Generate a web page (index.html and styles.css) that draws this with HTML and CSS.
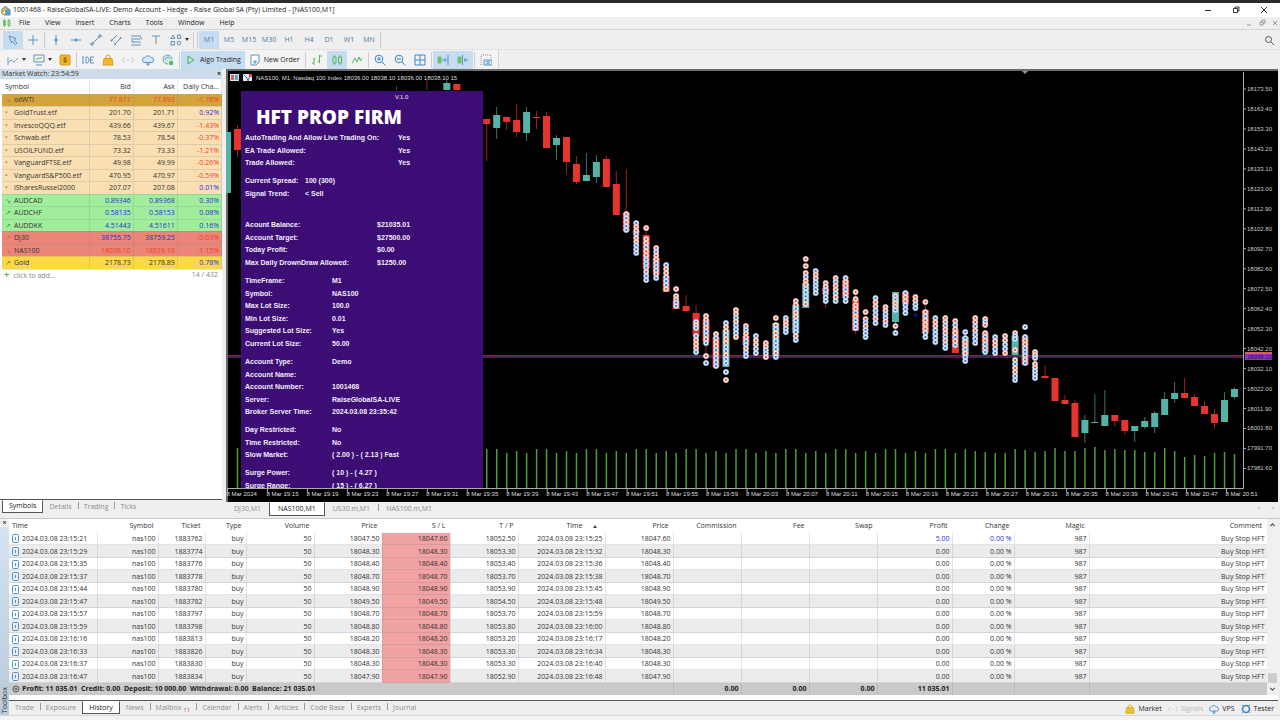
FILE: index.html
```html
<!DOCTYPE html>
<html lang="en">
<head>
<meta charset="utf-8">
<title>1001468 - RaiseGlobalSA-LIVE: Demo Account</title>
<link rel="stylesheet" href="styles.css">
</head>
<body>
<header class="titlebar">
  <svg class="logo" viewBox="0 0 12 12"><path d="M2 5 6 1l4 4" fill="none" stroke="#666" /><circle cx="5.500" cy="7" r="4" fill="#f3e3a0" stroke="#8a8348"/><path d="M7 5h4v6H6z" fill="#5aa0d8"/><path d="M2 8l3-3 2 3" fill="none" stroke="#4b9a4b"/></svg>
  <h1 class="title">1001468 - RaiseGlobalSA-LIVE: Demo Account - Hedge - Raise Global SA (Pty) Limited - [NAS100,M1]</h1>
  <div class="wins">
    <button aria-label="Minimize"><svg viewBox="0 0 8 8"><path d="M1 4.500h6"/></svg></button>
    <button aria-label="Restore"><svg viewBox="0 0 8 8"><path d="M1.500 2.500h4v4h-4zM3 2.500V1h4v4H5.500"/></svg></button>
    <button aria-label="Close"><svg viewBox="0 0 8 8"><path d="M1 1l6 6M7 1 1 7"/></svg></button>
  </div>
</header>
<nav class="menu">
  <svg class="menu-ico" viewBox="0 0 10 10"><path d="M1.500 2.500h2v5h-2zM6 2.500h2v5H6zM2.500 1v8M7 1v8" fill="#e4f7e4" stroke="#6cc46c"/></svg>
  <button>File</button><button>View</button><button>Insert</button><button>Charts</button><button>Tools</button><button>Window</button><button>Help</button>
  <div class="mdi"><button aria-label="Minimize chart"><svg viewBox="0 0 8 8"><path d="M2 6h4"/></svg></button><button aria-label="Restore chart"><svg viewBox="0 0 8 8"><path d="M2 3h3v3H2zM4 3V1h3v3H5"/></svg></button><button aria-label="Close chart"><svg viewBox="0 0 8 8"><path d="M2 2l4 4M6 2 2 6"/></svg></button></div>
</nav>
<div class="bar bar-draw">
  <button class="tb on" aria-label="Cursor"><svg viewBox="0 0 12 12"><path d="M2 2l7 2.500-2 1.500 3 3-1.500 1.500-3-3L4.500 9z"/></svg></button>
  <button class="tb" aria-label="Crosshair"><svg viewBox="0 0 12 12"><path d="M6 1v10M1 6h10"/></svg></button>
  <i class="sep"></i>
  <button class="tb" aria-label="Vertical line"><svg viewBox="0 0 12 12"><path d="M6 1v10M5 5h2v2H5z"/></svg></button>
  <button class="tb" aria-label="Horizontal line"><svg viewBox="0 0 12 12"><path d="M1 6h10M5 5h2v2H5z"/></svg></button>
  <button class="tb" aria-label="Trendline"><svg viewBox="0 0 12 12"><path d="M2 10 10 2M1 9h2v2H1zM9 1h2v2H9z"/></svg></button>
  <button class="tb" aria-label="Channel"><svg viewBox="0 0 12 12"><path d="M1 7l6-6M5 10l6-6M1 6h1v1H1zM4.500 9.500h1v1h-1zM10 3.500h1v1h-1z"/></svg></button>
  <button class="tb" aria-label="Fibonacci"><svg viewBox="0 0 12 12"><path d="M1 2h10M1 5h9M3 8h8M1 11h10M10 4h2v2M1 7h2v2"/></svg></button>
  <button class="tb" aria-label="Text"><svg viewBox="0 0 12 12"><path d="M2 2h8M6 2v8"/></svg></button>
  <button class="tb wide" aria-label="Shapes"><svg viewBox="0 0 12 12"><path d="M3 1l2 3.500H1zM7.500 1h3v3.500h-3zM1 7.500h3.500V11H1z"/><circle cx="9" cy="9.200" r="1.800"/></svg><b class="caret"></b></button>
  <i class="sep"></i><i class="grip"></i>
  <button class="tb on">M1</button><button class="tb">M5</button><button class="tb">M15</button><button class="tb">M30</button><button class="tb">H1</button><button class="tb">H4</button><button class="tb">D1</button><button class="tb">W1</button><button class="tb">MN</button>
  <i class="sep"></i>
  <button class="tb search" aria-label="Search"><svg viewBox="0 0 12 12"><circle cx="5.500" cy="5.500" r="3"/><path d="M8 8l3 3"/></svg></button>
</div>
<div class="bar-wrap">
<div class="bar bar-std">
  <button class="tb wide" aria-label="Chart type"><svg viewBox="0 0 12 12"><path d="M1 3v8M1 9l3-3 3 2 4-4" stroke="#6f9fc4"/></svg><b class="caret"></b></button>
  <button class="tb wide" aria-label="Templates"><svg viewBox="0 0 12 12"><path d="M1 1h10v7H1zM3 11h6"/><path d="M3 6l2-2 2 1 2-2" stroke="#4db36a"/></svg><b class="caret"></b></button>
  <button class="tb" aria-label="Currency"><svg viewBox="0 0 12 12"><rect x="1" y="1" width="10" height="10" rx="1" fill="#f0b429" stroke="#d99a15"/><path d="M8 4H5v2h2.500v2H4.500M6 3v6" stroke="#9a6a08"/></svg></button>
  <i class="sep"></i>
  <button class="tb" aria-label="IDE"><svg viewBox="0 0 12 12"><path d="M0 3h2M1 3v6M0 9h2M4 3h1.500l1.500 2v2L5.500 9H4zM12 3H8.500v6H12M8.500 6H11"/></svg></button>
  <button class="tb" aria-label="Market"><svg viewBox="0 0 12 12"><path d="M2 4.500h8l1 6.500H1z" fill="#f5b52c" stroke="#dd9c1a"/><path d="M4 5V3a2 2 0 0 1 4 0v2" stroke="#dd9c1a"/></svg></button>
  <button class="tb" aria-label="Signals"><svg viewBox="0 0 12 12"><path d="M2.500 3a4 4 0 0 0 0 6M9.500 3a4 4 0 0 1 0 6M4.500 6h3" stroke="#c4c4c4"/></svg></button>
  <button class="tb" aria-label="VPS"><svg viewBox="0 0 12 12"><path d="M3 8.500a2.500 2.500 0 0 1 0-5 3.500 3.500 0 0 1 6 0 2.500 2.500 0 0 1 0 5zM5 8.500V11h2V8.500" fill="#d9ebfa"/></svg></button>
  <button class="tb" aria-label="Community"><svg viewBox="0 0 12 12"><circle cx="5.500" cy="5.500" r="4.500" fill="#cfe9df" stroke="#6ba6b8"/><path d="M3 6a3 3 0 0 1 5-2" stroke="#6ba6b8"/><circle cx="9" cy="9" r="2.800" fill="#4fbf5d" stroke="#e8f6e8"/></svg></button>
  <i class="sep"></i>
  <button class="tb label on"><svg viewBox="0 0 12 12"><path d="M3 2l6 4-6 4z" stroke="#43b649"/></svg>Algo Trading</button>
  <button class="tb label"><svg viewBox="0 0 12 12"><path d="M2 1h8v7l-3 3H2z" fill="#fff"/><path d="M4 8h4M6 6v4" stroke="#4a90d0"/></svg>New Order</button>
  <i class="sep"></i>
  <button class="tb" aria-label="Bar chart"><svg class="gr" viewBox="0 0 12 12"><path d="M3 4v7M1 9h2M3 5h1.500M8.500 1v8M7 7h1.500M8.500 2H11"/></svg></button>
  <button class="tb on" aria-label="Candles"><svg class="gr" viewBox="0 0 12 12"><path d="M2 3h3v6H2zM7.500 3h3v6h-3zM3.500 1v2M3.500 9v2M9 1v2M9 9v2"/></svg></button>
  <button class="tb" aria-label="Line chart"><svg class="gr" viewBox="0 0 12 12"><path d="M1 9l3-5 2 4 2-5 1.500 4L11 4"/></svg></button>
  <i class="sep"></i>
  <button class="tb" aria-label="Zoom in"><svg class="bl" viewBox="0 0 12 12"><circle cx="5" cy="5" r="3.800"/><path d="M8 8l3.500 3.500M3 5h4M5 3v4"/></svg></button>
  <button class="tb" aria-label="Zoom out"><svg class="bl" viewBox="0 0 12 12"><circle cx="5" cy="5" r="3.800"/><path d="M8 8l3.500 3.500M3 5h4"/></svg></button>
  <button class="tb" aria-label="Tile"><svg class="bl" viewBox="0 0 12 12"><path d="M1 1h10v10H1zM6 1v10M1 6h10"/></svg></button>
  <i class="sep"></i>
  <button class="tb on" aria-label="Auto scroll"><svg viewBox="0 0 12 12"><path d="M1 3h3v6H1z" fill="#6cc070" stroke="#6cc070"/><path d="M5 6h4M7.500 4l2 2-2 2M11 1v10"/></svg></button>
  <button class="tb on" aria-label="Chart shift"><svg viewBox="0 0 12 12"><path d="M1 3h3v6H1z" fill="#6cc070" stroke="#6cc070"/><path d="M5.500 1v10M11 6H7M9 4L7 6l2 2"/></svg></button>
  <i class="sep"></i>
  <button class="tb" aria-label="Screenshot"><svg viewBox="0 0 12 12"><path d="M1 11V1h10v3" stroke="#999" stroke-dasharray="1 1"/><path d="M4 6h8v5H4z" fill="#dbe9f5"/><circle cx="8" cy="8.500" r="1.300"/></svg></button>
</div>
</div>

<main class="work">
  <section class="watch">
    <div class="pane-title"><span>Market Watch: 23:54:59</span><button aria-label="Close Market Watch">×</button></div>
    <div class="watch-body">
      <table class="grid watch-grid">
        <colgroup><col class="w-sym"><col class="w-num"><col class="w-num"><col class="w-num"></colgroup>
        <thead><tr><th>Symbol</th><th>Bid</th><th>Ask</th><th>Daily Cha...</th></tr></thead>
        <tbody id="watch"></tbody>
      </table>
      <div class="add"><button><b>+</b>click to add...</button><span>14 / 432</span></div>
    </div>
    <div class="tabs watch-tabs"><button class="active">Symbols</button><button>Details</button><button>Trading</button><button>Ticks</button></div>
  </section>
  <section class="chart-pane">
    <div class="chart">
      <svg id="plot" viewBox="226 69 1052 433"></svg>
      <div class="ea">
        <p class="ver">V.1.0</p>
        <h2>HFT PROP FIRM</h2>
        <div id="ea"></div>
      </div>
    </div>
    <div class="tabs chart-tabs"><button>DJ30,M1</button><button class="active">NAS100,M1</button><button>US30.m,M1</button><button>NAS100.m,M1</button><span class="arrows">‹<b></b>›</span></div>
  </section>
</main>

<section class="toolbox">
  <div class="side"><button aria-label="Close Toolbox">×</button><span>Toolbox</span></div>
  <div class="box">
    <div class="history">
      <table class="grid hist">
        <colgroup><col class="c88"><col class="c61"><col class="c47"><col class="c41"><col class="c68"><col class="c68"><col class="c68"><col class="c68"><col class="c87"><col class="c68"><col class="c68"><col class="c68"><col class="c68"><col class="c75"><col class="c62"><col class="c75"><col></colgroup>
        <thead><tr><th>Time</th><th>Symbol</th><th>Ticket</th><th>Type</th><th>Volume</th><th>Price</th><th>S / L</th><th>T / P</th><th class="sorted">Time<b></b></th><th>Price</th><th>Commission</th><th>Fee</th><th>Swap</th><th>Profit</th><th>Change</th><th>Magic</th><th>Comment</th></tr></thead>
        <tbody id="hist"></tbody>
        <tfoot><tr><td colspan="10"><svg class="plus" viewBox="0 0 8 8"><circle cx="4" cy="4" r="3"/><path d="M2.500 4h3M4 2.500v3"/></svg>Profit: 11 035.01&nbsp; Credit: 0.00&nbsp; Deposit: 10 000.00&nbsp; Withdrawal: 0.00&nbsp; Balance: 21 035.01</td><td>0.00</td><td>0.00</td><td>0.00</td><td>11 035.01</td><td></td><td></td><td></td></tr></tfoot>
      </table>
      <div class="scroll"><svg viewBox="0 0 8 8"><path d="M2 5l2-2 2 2"/></svg><i></i><svg viewBox="0 0 8 8"><path d="M2 3l2 2 2-2"/></svg></div>
    </div>
    <div class="tabs box-tabs">
      <button>Trade</button><button>Exposure</button><button class="active">History</button><button>News</button><button>Mailbox <sub>11</sub></button><button>Calendar</button><button>Alerts</button><button>Articles</button><button>Code Base</button><button>Experts</button><button>Journal</button>
      <div class="links">
        <a href="#"><svg viewBox="0 0 12 12"><path d="M2 4.500h8l1 6.500H1z" fill="#f0c02c" stroke="#d9a51a"/><path d="M4 5V3a2 2 0 0 1 4 0v2" stroke="#d9a51a"/></svg>Market</a>
        <a href="#" class="off"><svg viewBox="0 0 12 12"><path d="M2.500 3a4 4 0 0 0 0 6M9.500 3a4 4 0 0 1 0 6M4.500 6h3" stroke="#ccc"/></svg>Signals</a>
        <a href="#"><svg class="bl" viewBox="0 0 12 12"><path d="M3 8.500a2.500 2.500 0 0 1 0-5 3.500 3.500 0 0 1 6 0 2.500 2.500 0 0 1 0 5zM5 8.500V11h2V8.500"/></svg>VPS</a>
        <a href="#"><svg class="bl" viewBox="0 0 12 12"><circle cx="6" cy="6" r="4.200" stroke-width="2"/><path d="M1 1l2 2M11 1 9 3M1 11l2-2M11 11 9 9"/></svg>Tester</a>
      </div>
    </div>
  </div>
</section>
<footer class="status"></footer>
<script src="app.js"></script>
</body>
</html>
```
FILE: styles.css
```css
* { box-sizing: border-box; }
body { margin: 0; min-height: 100vh; display: flex; flex-direction: column; background: #efefef; color: #333; font: 7px/12px "Open Sans", "Noto Sans", sans-serif; border-top: 3px solid #2a2a2a; overflow-x: hidden; }
button { font: inherit; color: inherit; background: none; border: 0; padding: 0; margin: 0; }
svg { fill: none; stroke: #5f93bd; display: block; }
svg.gr { stroke: #55b95a; }
svg.bl { stroke: #3f86c6; }
h1, h2, p { margin: 0; }

.titlebar { display: flex; align-items: center; height: 14px; background: #fff; }
.logo { width: 11px; height: 11px; }
.title { font-size: 7px; font-weight: 400; color: #222; padding-left: 2px; }
.wins { margin-left: auto; display: flex; gap: 20px; padding-right: 12px; }
.wins svg { width: 8px; height: 8px; stroke: #333; }
.menu { display: flex; align-items: center; height: 13px; border-bottom: 1px solid #d4d4d4; color: #222; padding-left: 2px; }
.menu-ico { width: 10px; height: 10px; margin-right: 7px; }
.menu button { margin-right: 15px; }
.mdi { margin-left: auto; display: flex; gap: 5px; padding-right: 1px; }
.menu .mdi button { margin: 0; }
.mdi svg { width: 8px; height: 8px; stroke: #999; }

.bar { display: flex; align-items: center; height: 20px; background: #f3f3f3; padding-left: 3px; }
.bar-draw { background: #efefef; border-bottom: 1px solid #e2e2e2; }
.bar-wrap { display: flex; }
.bar-std { height: 19px; border-right: 1px solid #d4d4d4; padding-right: 2px; }
.tb { width: 20px; height: 18px; display: flex; align-items: center; justify-content: center; color: #4c7da6; }
.tb svg { width: 12px; height: 12px; flex: none; }
.tb.on { background: #c5dcf1; }
.tb.wide { width: 26px; gap: 3px; }
.tb.label { width: auto; padding: 0 4px; gap: 3px; color: #222; }
.tb.search { margin-left: auto; margin-right: 1px; }
.tb.search svg { stroke: #555; }
.caret { border: 2px solid transparent; border-top: 3px solid #333; border-bottom: 0; }
.sep { width: 1px; height: 16px; margin: 0 1px; background: #ccc; }
.grip { width: 1px; height: 16px; margin: 0 1px 0 2px; background: #ccc; }

.work { display: flex; flex: 1; align-items: stretch; }
.watch { width: 222px; flex: none; display: flex; flex-direction: column; margin-right: 4px; }
.pane-title { display: flex; justify-content: space-between; height: 10px; line-height: 10px; background: #cddbea; padding: 0 1px 0 2px; }
.pane-title button { font-weight: 700; color: #222; }
.watch-body { flex: 1; background: #fff; padding-left: 2px; border-bottom: 1px solid #555; }
.grid { border-collapse: collapse; table-layout: fixed; width: 100%; }
.grid th, .grid td { padding: 0 2px 0 3px; line-height: 11px; text-align: right; font-weight: 400; white-space: nowrap; border-right: 1px solid rgba(120, 130, 150, .22); }
.grid tbody tr { height: 12px; border-bottom: 1px solid rgba(120, 130, 150, .22); }
.grid tbody tr:nth-child(even) { height: 13px; }
.grid th:first-child, .grid td:first-child { text-align: left; }
.watch-grid thead tr { height: 15px; }
.w-sym { width: 87px; }
.w-num { width: 44px; }
.watch-grid .arrow { display: inline-block; width: 9px; color: #c46a4a; }
.t-gold { background: #d4a43c; }
.t-etf { background: #fadfb2; }
.t-green { background: #a0ee9c; }
.t-red { background: #ea8578; }
.t-yellow { background: #fcd848; }
.up { color: #2c2cd8; }
.down { color: #f0402a; }
.t-green .arrow, .t-yellow .arrow { color: #2f9e3c; }
.add { display: flex; justify-content: space-between; color: #888; padding: 0 4px 0 2px; line-height: 10px; }
.add b { color: #49b84f; margin-right: 4px; font-size: 9px; }

.tabs { display: flex; align-items: flex-start; color: #8c8c8c; }
.tabs button { height: 13px; line-height: 11px; padding: 0 6px; position: relative; }
.tabs .active { background: #fff; color: #222; border: 1px solid #555; border-top-color: #fff; line-height: 10px; }
.tabs button:not(.active) + button:not(.active)::before { content: ""; position: absolute; left: 0; top: 2px; height: 7px; border-left: 1px solid #999; }
.watch-tabs { height: 18px; padding-left: 2px; }
.chart-pane { flex: 1; min-width: 0; display: flex; flex-direction: column; }
.chart { position: relative; background: #000; margin-right: 2px; }
#plot { width: 100%; height: auto; stroke: none; font: 6px "Liberation Sans", Arial, sans-serif; }
.chart-tabs { flex: 1; min-height: 15px; }
.chart-tabs button { padding: 0 8px; height: 14px; line-height: 14px; }
.chart-tabs .active { line-height: 12px; }
.arrows { margin-left: auto; padding-right: 6px; display: flex; gap: 6px; }

.ea { position: absolute; left: 15px; top: 22px; bottom: 14px; width: 242px; background: #3c0d74; color: #f2ecfa; overflow: hidden; padding: 0 4px; font: 700 7px/12px "Liberation Sans", Arial, sans-serif; }
.ver { font-size: 6px; font-weight: 400; padding-left: 150px; }
.ea h2 { font: 800 19px/29px "Open Sans", "Noto Sans", sans-serif; padding-left: 11px; color: #fff; }
.ea dl { margin: 0 0 6px; }
.ea dl.far { margin-bottom: 19px; }
.ea dl div { display: flex; }
.ea dl div:nth-child(even) { line-height: 13px; }
.ea dt { width: 87px; white-space: nowrap; }
.ea dd { margin: 0; white-space: nowrap; }
.ea .k-wide dt { width: 153px; }
.ea .k-near dt { width: 60px; }
.ea .k-mid dt { width: 132px; }

.toolbox { display: flex; border-top: 1px solid #c8c8c8; }
.side { width: 9px; flex: none; background: linear-gradient(#d6e4f2, #b9cadb); display: flex; flex-direction: column; justify-content: space-between; align-items: center; }
.side button { font-weight: 700; line-height: 8px; background: #efefef; width: 100%; }
.side span { writing-mode: vertical-rl; transform: rotate(180deg); line-height: 9px; padding-top: 2px; }
.box { flex: 1; min-width: 0; }
.history { display: flex; background: #fff; padding-bottom: 5px; border-bottom: 1px solid #555; margin-right: 2px; }
.hist thead tr { height: 14px; }
.hist th { border-right-color: transparent; padding-right: 4px; }
.hist tbody tr:nth-child(even) { background: #ececec; }
.hist td:nth-child(7) { background: #f1a2a2; }
.hist tfoot tr { height: 12px; background: #c9c9c9; color: #222; }
.hist tfoot td, .hist tfoot td:nth-child(7) { background: #c9c9c9; line-height: 12px; font-weight: 700; }
.hist td:last-child { border-right: 0; }
.c88 { width: 88px; } .c61 { width: 61px; } .c47 { width: 47px; } .c41 { width: 41px; } .c68 { width: 68px; }
.c87 { width: 87px; } .c75 { width: 75px; } .c62 { width: 62px; }
.doc, .plus { display: inline-block; vertical-align: middle; width: 7px; height: 9px; margin-right: 3px; stroke: #4d94cf; }
.plus { width: 8px; height: 8px; margin-right: 2px; stroke: #555; }
.hist .sorted { padding-right: 8px; }
.sorted b { display: inline-block; vertical-align: middle; margin-left: 10px; border: 2px solid transparent; border-bottom: 3px solid #444; border-top: 0; }
.scroll { width: 11px; flex: none; background: #f0f0f0; display: flex; flex-direction: column; align-items: center; }
.scroll svg { width: 9px; height: 12px; stroke: #555; }
.scroll i { margin-top: auto; width: 9px; height: 10px; background: #cdcdcd; }
.box-tabs { height: 14px; }
.box-tabs sub { color: #e03c4c; font-size: 6px; line-height: 6px; }
.links { margin-left: auto; display: flex; gap: 6px; padding: 2px 6px 0 0; }
.links a { display: flex; align-items: center; gap: 3px; color: #222; text-decoration: none; }
.links svg { width: 10px; height: 10px; }
.links .off { color: #bbb; }
.status { height: 5px; border-top: 1px solid #d8d8d8; background: #f3f3f3; }
```
FILE: app.js
```js
const $ = id => document.getElementById(id);

// Market Watch: row tint, arrow, symbol, bid, ask, change, price class, change class
const quotes = [
  ['t-gold', '↘', 'oilWTI', '77.877', '77.893', '-1.76%', 'down', 'down'],
  ['t-etf', '•', 'GoldTrust.etf', '201.70', '201.71', '0.92%', '', 'up'],
  ['t-etf', '•', 'InvescoQQQ.etf', '439.66', '439.67', '-1.43%', '', 'down'],
  ['t-etf', '•', 'Schwab.etf', '78.53', '78.54', '-0.37%', '', 'down'],
  ['t-etf', '•', 'USOILFUND.etf', '73.32', '73.33', '-1.21%', '', 'down'],
  ['t-etf', '•', 'VanguardFTSE.etf', '49.98', '49.99', '-0.26%', '', 'down'],
  ['t-etf', '•', 'VanguardS&amp;P500.etf', '470.95', '470.97', '-0.59%', '', 'down'],
  ['t-etf', '•', 'iSharesRussel2000', '207.07', '207.08', '0.01%', '', 'up'],
  ['t-green', '↘', 'AUDCAD', '0.89346', '0.89368', '0.30%', 'up', 'up'],
  ['t-green', '↗', 'AUDCHF', '0.58135', '0.58153', '0.08%', 'up', 'up'],
  ['t-green', '↗', 'AUDDKK', '4.51443', '4.51611', '0.16%', 'up', 'up'],
  ['t-red', '↗', 'DJ30', '38755.75', '38759.25', '-0.03%', 'up', 'down'],
  ['t-red', '↘', 'NAS100', '18038.10', '18039.10', '-1.15%', 'down', 'down'],
  ['t-yellow', '↗', 'Gold', '2178.73', '2178.89', '0.78%', '', 'up']
];
$('watch').innerHTML = quotes.map(q =>
  `<tr class="${q[0]}"><td><span class="arrow">${q[1]}</span>${q[2]}</td><td class="${q[6]}">${q[3]}</td><td class="${q[6]}">${q[4]}</td><td class="${q[7]}">${q[5]}</td></tr>`).join('');

// Deal history: open time, ticket, price, S/L, T/P, close time, close price
const deals = [
  ['15:21', '762', '18047.50', '18047.60', '18052.50', '15:25', '18047.60'],
  ['15:29', '774', '18048.30', '18048.30', '18053.30', '15:32', '18048.30'],
  ['15:35', '776', '18048.40', '18048.40', '18053.40', '15:36', '18048.40'],
  ['15:37', '778', '18048.70', '18048.70', '18053.70', '15:38', '18048.70'],
  ['15:44', '780', '18048.90', '18048.90', '18053.90', '15:45', '18048.90'],
  ['15:47', '782', '18049.50', '18049.50', '18054.50', '15:48', '18049.50'],
  ['15:57', '797', '18048.70', '18048.70', '18053.70', '15:59', '18048.70'],
  ['15:59', '798', '18048.80', '18048.80', '18053.80', '16:00', '18048.80'],
  ['16:16', '813', '18048.20', '18048.20', '18053.20', '16:17', '18048.20'],
  ['16:33', '826', '18048.30', '18048.30', '18053.30', '16:34', '18048.30'],
  ['16:37', '830', '18048.30', '18048.30', '18053.30', '16:40', '18048.30'],
  ['16:47', '834', '18047.90', '18047.90', '18052.90', '16:48', '18047.90']
];
const doc = '<svg class="doc" viewBox="0 0 7 9"><rect x=".5" y=".5" width="6" height="8" rx="1"/><path d="M3.500 3v3"/></svg>';
$('hist').innerHTML = deals.map((d, i) => {
  const c = i ? '' : ' class="up"';
  return `<tr><td>${doc}2024.03.08 23:${d[0]}</td><td>nas100</td><td>1883${d[1]}</td><td>buy</td><td>50</td><td>${d[2]}</td><td>${d[3]}</td><td>${d[4]}</td><td>2024.03.08 23:${d[5]}</td><td>${d[6]}</td><td></td><td></td><td></td><td${c}>${i ? '0.00' : '5.00'}</td><td${c}>0.00 %</td><td>987</td><td>Buy Stop HFT</td></tr>`;
}).join('');

// Expert advisor panel
const panel = [
  ['k-wide', [['AutoTrading And Allow Live Trading On:', 'Yes'], ['EA Trade Allowed:', 'Yes'], ['Trade Allowed:', 'Yes']]],
  ['k-near far', [['Current Spread:', '100 (300)'], ['Signal Trend:', '&lt; Sell']]],
  ['k-mid', [['Acount Balance:', '$21035.01'], ['Account Target:', '$27500.00'], ['Today Profit:', '$0.00'], ['Max Daily DrownDraw Allowed:', '$1250.00']]],
  ['', [['TimeFrame:', 'M1'], ['Symbol:', 'NAS100'], ['Max Lot Size:', '100.0'], ['Min Lot Size:', '0.01'], ['Suggested Lot Size:', 'Yes'], ['Current Lot Size:', '50.00']]],
  ['', [['Account Type:', 'Demo'], ['Account Name:', ''], ['Account Number:', '1001468'], ['Server:', 'RaiseGlobalSA-LIVE'], ['Broker Server Time:', '2024.03.08 23:35:42']]],
  ['', [['Day Restricted:', 'No'], ['Time Restricted:', 'No'], ['Slow Market:', '( 2.00 ) - ( 2.13 ) Fast']]],
  ['', [['Surge Power:', '( 10 ) - ( 4.27 )'], ['Surge Range:', '( 15 ) - ( 6.27 )']]]
];
$('ea').innerHTML = panel.map(([cls, rows]) =>
  `<dl class="${cls}">${rows.map(r => `<div><dt>${r[0]}</dt><dd>${r[1]}</dd></div>`).join('')}</dl>`).join('');

// Candles: index, colour, body top, body bottom, wick top, wick bottom
const RED = '#e5352d', TEAL = '#55b3a6';
const candles = [
  [-26, 't', 132, 193], [-25, 'r', 129, 150, 125, 157], [-4, 't', 83, 90, 80, 90], [-3, 'r', 84, 90],
  [0, 'r', 119, 124, 119, 161], [1, 't', 115, 128, 107, 139], [2, 'r', 117, 122, 117, 130], [3, 'r', 120, 132, 104, 137],
  [4, 't', 112, 133, 107, 141], [5, 'r', 117, 118, 111, 129], [6, 'r', 116, 148, 112, 148], [7, 't', 138, 145, 135, 160],
  [8, 'r', 137, 162, 137, 174], [9, 'r', 164, 182, 156, 184], [10, 't', 175, 181, 153, 181], [11, 't', 162, 177, 155, 183],
  [12, 'r', 159, 187, 156, 187], [13, 'r', 184, 215, 171, 215], [14, 'r', 213, 231, 169, 231], [15, 'r', 231, 233, 221, 255],
  [16, 'r', 235, 268, 226, 280], [17, 'r', 258, 274], [18, 'r', 276, 292], [19, 'r', 301, 309], [20, 'r', 306, 311, 295, 311],
  [21, 'r', 313, 336, 305, 350], [22, 'r', 320, 342, 314, 364], [23, 'r', 337, 367], [24, 't', 330, 367], [26, 'r', 336, 345],
  [29, 't', 323, 356], [31, 't', 305, 333], [32, 't', 283, 308], [34, 'r', 288, 294, 283, 308], [36, 'r', 280, 298],
  [37, 'r', 300, 331, 292, 334], [41, 't', 292, 322, 292, 334], [42, 'r', 292, 304], [44, 'r', 310, 333, 300, 335],
  [47, 'r', 330, 353], [48, 't', 337, 355], [50, 'r', 333, 352], [53, 't', 336, 355], [54, 'r', 337, 365],
  [56, 'r', 376, 378, 365, 378], [57, 'r', 378, 401], [58, 'r', 400, 404, 395, 404], [59, 'r', 403, 437, 400, 437],
  [60, 't', 420, 433, 415, 443], [61, 't', 422, 423, 394, 423], [62, 't', 415, 426, 390, 426], [63, 'r', 415, 421, 415, 427],
  [64, 'r', 420, 431, 420, 435], [65, 't', 426, 431, 426, 442], [66, 't', 421, 427, 417, 429], [67, 't', 413, 427, 411, 433],
  [68, 't', 399, 415, 392, 415], [69, 't', 393, 399, 382, 403], [70, 'r', 393, 398, 378, 398], [71, 'r', 397, 406, 394, 406],
  [72, 'r', 406, 414, 401, 414], [73, 'r', 414, 423, 409, 429], [74, 't', 400, 422, 392, 422], [75, 't', 389, 397, 387, 399]
];
// Trade markers: candle index followed by first/last y of each run
const marks = [
  [14, 214, 230], [15, 223, 253], [16, 228, 228, 239, 280], [17, 248, 278], [18, 265, 289], [19, 289, 289, 296, 306],
  [21, 322, 328, 336, 352], [22, 316, 343, 356, 356, 363, 363], [23, 334, 366], [24, 323, 363, 372, 372, 380, 380],
  [25, 310, 337], [26, 326, 356], [27, 336, 353], [28, 343, 357], [29, 318, 318, 325, 357], [30, 318, 332], [31, 301, 340],
  [32, 259, 259, 266, 266, 273, 304], [33, 271, 293], [34, 283, 301], [35, 278, 301], [36, 278, 301],
  [37, 292, 292, 299, 299, 305, 328], [38, 312, 312, 319, 337], [39, 298, 323], [40, 307, 325],
  [41, 296, 310, 326, 326, 333, 333], [42, 293, 313], [43, 297, 308], [44, 302, 302, 312, 337], [45, 318, 342],
  [46, 318, 348], [47, 321, 345], [48, 332, 332, 338, 361], [49, 318, 343], [50, 319, 325, 333, 352], [51, 337, 353],
  [52, 336, 353], [53, 333, 339, 350, 350, 360, 380], [54, 327, 327, 337, 363], [55, 352, 358, 364, 378]
];
const volumeTail = [449, 451, 452, 453, 453, 449, 450, 452, 451, 448, 451, 451, 448, 447, 450, 449, 450, 450, 452, 452, 448, 451, 457, 455, 456, 453, 452, 454];
const cx = i => 486.7 + 9.97 * i;
let s = '<rect x="226" y="69" width="1052" height="433" fill="#000"/>';
s += '<path d="M226 70H1278M227 69V502" stroke="#6b6b6b" stroke-width="2"/><path d="M228 488.500H1243.500V72" fill="none" stroke="#aaa"/>';
for (let i = -25; i <= 75; i++) {
  if (i > -25 && i < 0) continue;
  const top = i >= 48 ? volumeTail[i - 48] : i === -25 ? 448 : 449 + (i * i * 7 + i * 3) % 5;
  s += `<rect x="${cx(i) - .7}" y="${top}" width="1.500" height="${488 - top}" fill="#4f9c3a"/>`;
}
s += '<path d="M228 355.500H1243" stroke="#85263c"/><path d="M228 357H1243" stroke="#4d1c56" stroke-width="2"/>';
for (const [i, c, t, b, wt, wb] of candles) {
  const x = cx(i), f = c === 'r' ? RED : TEAL;
  if (wt !== undefined) s += `<path d="M${x} ${wt}V${wb}" stroke="${f}" opacity=".65"/>`;
  s += `<rect x="${x - 3.5}" y="${t}" width="7" height="${Math.max(b - t, 1)}" fill="${f}"/>`;
}
for (const [i, ...runs] of marks) {
  for (let k = 0; k < runs.length; k += 2) {
    const a = runs[k], b = runs[k + 1], n = Math.max(1, Math.round((b - a) / 4));
    for (let j = 0; j <= (a === b ? 0 : n); j++) {
      const y = a + (b - a) * j / n;
      const last = k > 0 && k === runs.length - 2;
      const blue = (j / n > .5 || (last && a === b)) ? (i + j) % 4 !== 0 : (i + j) % 3 === 0;
      s += `<circle cx="${cx(i)}" cy="${y}" r="2.600" fill="${blue ? '#e4eefc' : '#fdeee6'}" stroke="${blue ? '#a3c6ea' : '#eeb5a6'}" stroke-width=".8"/><circle cx="${cx(i)}" cy="${y}" r="1.100" fill="${blue ? '#2f62b8' : '#d0493e'}"/>`;
    }
  }
}
s += `<circle cx="${cx(43)}" cy="315" r="2" fill="#12126e"/><path d="M1022 71h6l-3 3z" fill="#999"/>`;
s += '<path d="M427 80v10M396.500 86v4" stroke="#7a3030"/>';
for (let n = 0; n < 20; n++) {
  const y = 89 + 19.97 * n;
  s += `<path d="M1243 ${y}h3" stroke="#aaa"/><text x="1247" y="${y + 2}" fill="#ccc">${(18173.5 - 10.1 * n).toFixed(2)}</text>`;
}
s += '<rect x="1245" y="352" width="27" height="2" fill="#d4605c"/><rect x="1245" y="354" width="27" height="6" fill="#8a35c6"/><text x="1247" y="359" fill="#2c0b58">18038.10</text>';
for (let n = 0; n <= 25; n++) {
  const m = 11 + 4 * n, x = 226.5 + 39.96 * n;
  const label = n ? `8 Mar ${19 + Math.floor(m / 60)}:${String(m % 60).padStart(2, '0')}` : '8 Mar 2024';
  s += `<path d="M${x + 1} 488v4" stroke="#aaa"/><text x="${x}" y="496" fill="#ddd">${label}</text>`;
}
s += '<rect x="230" y="74" width="9" height="7" fill="#d9e4ee"/><rect x="231" y="75" width="3" height="5" fill="#e0605a"/><rect x="235" y="75" width="3" height="5" fill="#6aa0c8"/>';
s += '<rect x="243" y="74" width="9" height="7" fill="#e8eef4"/><path d="M244 75l3 3 1 3 1-3 2-3" fill="none" stroke="#3c74b8"/><rect x="249" y="74" width="3" height="3" fill="#d84d4d"/>';
s += '<text x="256" y="80" fill="#ddd">NAS100, M1: Nasdaq 100 Index 18036.00 18038.10 18036.00 18038.10 15</text>';
$('plot').innerHTML = s;
```
